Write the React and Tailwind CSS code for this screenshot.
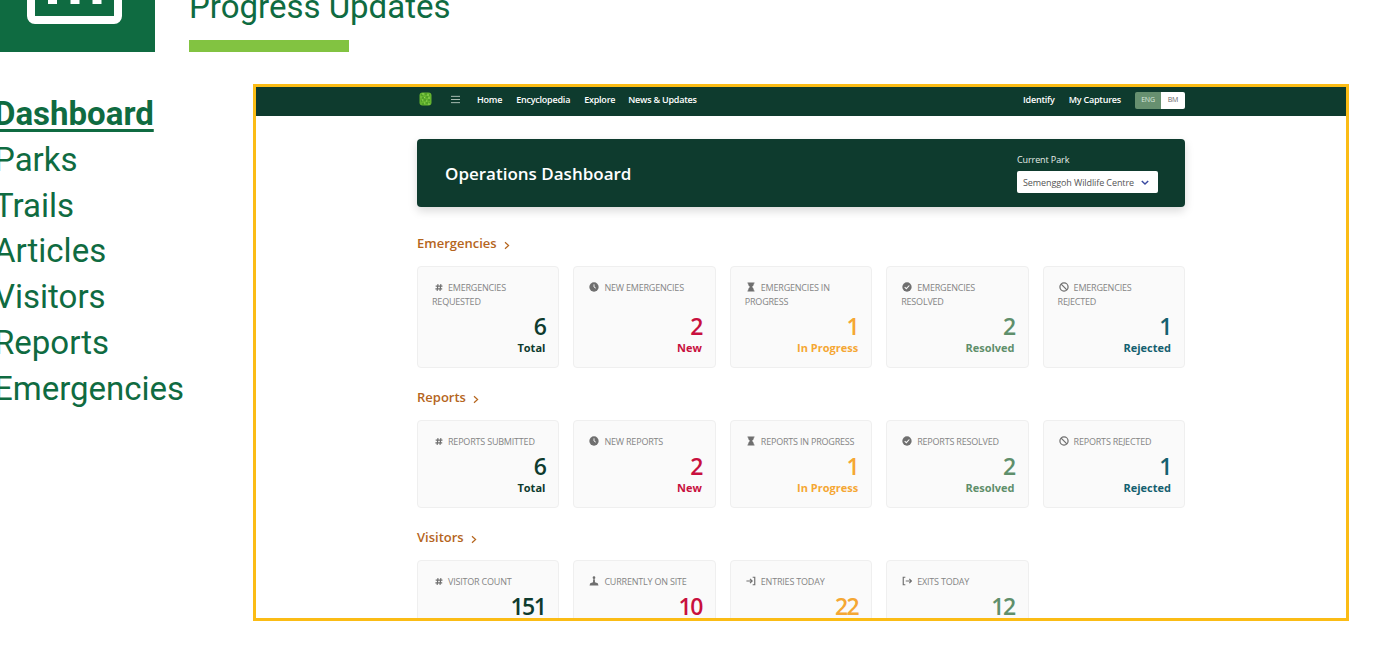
import React from "react";

const NAVY = "text-[#0e3b2e]";

const Hash = () => (
  <svg viewBox="0 0 12 12" className="w-[8px] h-[9px]" fill="none" stroke="#6f6f6f" strokeWidth="1.8">
    <path d="M4.5 1 3.2 11M8.8 1 7.5 11M1 4h10.2M.6 8h10.2" />
  </svg>
);
const Clock = () => (
  <svg viewBox="0 0 12 12" className="w-[10px] h-[10px]">
    <circle cx="6" cy="6" r="5.6" fill="#6f6f6f" />
    <path d="M6 2.8V6l2.2 1.4" fill="none" stroke="#fafafa" strokeWidth="1.1" />
  </svg>
);
const Hourglass = () => (
  <svg viewBox="0 0 12 12" className="w-[10px] h-[10px]" fill="#6f6f6f">
    <path d="M1.8.5h8.4v1.4h-.8c0 2.2-1 3.3-2.2 4.1 1.2.8 2.2 1.9 2.2 4.1h.8v1.4H1.8v-1.4h.8c0-2.2 1-3.3 2.2-4.1-1.2-.8-2.2-1.9-2.2-4.1h-.8z" />
  </svg>
);
const Check = () => (
  <svg viewBox="0 0 12 12" className="w-[10px] h-[10px]">
    <circle cx="6" cy="6" r="5.6" fill="#6f6f6f" />
    <path d="M3.2 6.2 5.2 8l3.6-3.8" fill="none" stroke="#fafafa" strokeWidth="1.3" />
  </svg>
);
const Ban = () => (
  <svg viewBox="0 0 12 12" className="w-[10px] h-[10px]" fill="none" stroke="#6f6f6f" strokeWidth="1.5">
    <circle cx="6" cy="6" r="4.9" />
    <path d="M2.6 2.6l6.8 6.8" />
  </svg>
);
const Person = () => (
  <svg viewBox="0 0 12 12" className="w-[10px] h-[10px]" fill="#6f6f6f">
    <circle cx="6" cy="2" r="1.6" />
    <path d="M5 4h2l.2 3.4 3.3 1.4.9 2.7H.6l.9-2.7 3.3-1.4z" />
  </svg>
);
const Enter = () => (
  <svg viewBox="0 0 12 12" className="w-[10px] h-[10px]" fill="none" stroke="#6f6f6f" strokeWidth="1.4">
    <path d="M.5 6h6.5M4.8 3.4 7.4 6 4.8 8.6M8 1.5h2.5v9H8" />
  </svg>
);
const Exit = () => (
  <svg viewBox="0 0 12 12" className="w-[10px] h-[10px]" fill="none" stroke="#6f6f6f" strokeWidth="1.4">
    <path d="M4 1.5H1.5v9H4M4.5 6h7M8.8 3.4 11.4 6 8.8 8.6" />
  </svg>
);
const Chevron = () => (
  <svg viewBox="0 0 10 10" className="w-[8px] h-[9px] ml-[6px] mt-[2px]" fill="none" stroke="#b5651d" strokeWidth="1.5">
    <path d="M2.5 1 7 5 2.5 9" />
  </svg>
);
const Logo = () => (
  <svg viewBox="0 0 13 14" className="w-[13px] h-[14px] -mt-[3px]">
    <rect x="0.5" y="0.5" width="12" height="13" rx="3" fill="#64b32e" />
    <path d="M2 3h2M6 2h2M10 3h1M3 6h2M7 5h2M2 9h1M5 8h2M9 8h2M3 12h2M7 11h2M10 11h1" stroke="#3f8f24" strokeWidth="1" />
    <path d="M3 2h2M8 3h2M1.500 5h1M5 5.500h1M9 6h2M3 8h1M7 9h1M5 11h1M9 12h2" stroke="#93d65a" strokeWidth="1" />
  </svg>
);

function Card({ icon, label, value, caption, color, tall }) {
  return (
    <div className={`rounded-[4px] border border-[#efefef] bg-[#fafafa] pl-[14px] pr-[13px] pt-[14px] ${tall ? "h-[102px]" : "h-[88px]"}`}>
      <div className="h-[30px] text-[9px] tracking-[-0.2px] leading-[14px] text-[#858585]">
        <span className="inline-flex w-[16px] justify-end pr-[5px] align-[-1px]">{icon}</span>
        {label}
      </div>
      <div className={`text-right text-[23px] tracking-[-1.5px] leading-[24px] font-semibold ${tall ? "mt-[3px]" : "-mt-[14px] pt-[3px]"} ${color}`}>{value}</div>
      {caption && <div className={`text-right text-[11px] leading-[18px] font-bold mt-[1px] ${color}`}>{caption}</div>}
    </div>
  );
}

function Section({ title, className, children }) {
  return (
    <section className={className}>
      <div className="flex items-center h-[18px] text-[13px] font-semibold text-[#b5651d]">
        {title}
        <Chevron />
      </div>
      <div className="grid grid-cols-5 gap-[14px] mt-[13px]">{children}</div>
    </section>
  );
}

const green = "text-[#5f8f6b]";
const orange = "text-[#f5a733]";
const red = "text-[#c8103e]";
const teal = "text-[#14606f]";

function Menu() {
  return (
    <nav className="-ml-[6px] w-[259px] shrink-0 pt-[39px] text-[33px] leading-[45.8px] text-[#0f6b41]">
      <div className="font-bold underline decoration-[3px] underline-offset-[4px]">Dashboard</div>
      <div>Parks</div>
      <div>Trails</div>
      <div>Articles</div>
      <div>Visitors</div>
      <div>Reports</div>
      <div>Emergencies</div>
    </nav>
  );
}

export default function App() {
  return (
    <div className="w-[1400px] h-[653px] overflow-hidden bg-white font-['Roboto',sans-serif]">
      <header className="flex h-[52px] items-end">
        <div className="w-[155px] h-[52px] bg-[#0f6b41] shrink-0">
          <svg viewBox="0 0 155 52" className="w-[155px] h-[52px]" fill="none" stroke="#fff">
            <rect x="31" y="-40" width="87" height="60" rx="4" strokeWidth="8" />
            <path d="M52.500 -5V4M75 -5V4M97 -5V4" strokeWidth="9" />
          </svg>
        </div>
        <div className="ml-[34px] flex flex-col h-[52px]">
          <div className="text-[33px] leading-[30px] -mt-[8px] text-[#0f6b41] whitespace-nowrap">Progress Updates</div>
          <div className="w-[160px] h-[12px] mt-auto bg-[#82c341]" />
        </div>
      </header>
      <main className="flex items-start">
        <Menu />
        <div className="mt-[32px] w-[1096px] h-[537px] overflow-hidden border-[3px] border-[#fbbc15] bg-white font-['Open_Sans',sans-serif]">
          <div className="flex items-center h-[29px] bg-[#0e3b2e] pb-[3px] pl-[163px] pr-[161px] text-[9px] tracking-[-0.22px] font-semibold text-white">
            <Logo />
            <svg viewBox="0 0 12 10" className="w-[11px] h-[9px] ml-[18px] -mt-[1px]" stroke="#b9c9c1" strokeWidth="1">
              <path d="M1 1.500h10M1 5h10M1 8.500h10" />
            </svg>
            <span className="ml-[16px]">Home</span>
            <span className="ml-[14px]">Encyclopedia</span>
            <span className="ml-[14px]">Explore</span>
            <span className="ml-[13px]">News &amp; Updates</span>
            <span className="ml-auto">Identify</span>
            <span className="ml-[14px]">My Captures</span>
            <div className="ml-[14px] flex h-[17px] w-[50px] rounded-[2px] overflow-hidden text-[7px] font-normal">
              <span className="flex-1 flex items-center justify-center bg-[#679070] text-[#dbe8df]">ENG</span>
              <span className="w-[24px] flex items-center justify-center bg-white text-[#666]">BM</span>
            </div>
          </div>
          <div className="mx-[161px] mt-[23px]">
            <div className="flex items-center justify-between h-[68px] rounded-[4px] bg-[#0e3b2e] pl-[28px] pr-[27px] shadow-[0_4px_10px_rgba(0,0,0,0.15)]">
              <span className="text-[17px] font-semibold text-white pt-[2px]">Operations Dashboard</span>
              <div>
                <div className="text-[9px] tracking-[-0.1px] leading-[13px] text-[#e5ece8]">Current Park</div>
                <div className="mt-[5px] flex items-center justify-between h-[22px] w-[141px] rounded-[2px] bg-white pt-[1px] pl-[6px] pr-[9px] text-[9px] tracking-[-0.1px] text-[#555]">
                  Semenggoh Wildlife Centre
                  <svg viewBox="0 0 10 8" className="w-[8px] h-[7px]" fill="none" stroke="#3a4aa0" strokeWidth="1.8">
                    <path d="M1 2l4 4 4-4" />
                  </svg>
                </div>
              </div>
            </div>
            <Section title="Emergencies" className="mt-[28px]">
              <Card tall icon={<Hash />} label="EMERGENCIES REQUESTED" value="6" caption="Total" color={NAVY} />
              <Card tall icon={<Clock />} label="NEW EMERGENCIES" value="2" caption="New" color={red} />
              <Card tall icon={<Hourglass />} label="EMERGENCIES IN PROGRESS" value="1" caption="In Progress" color={orange} />
              <Card tall icon={<Check />} label="EMERGENCIES RESOLVED" value="2" caption="Resolved" color={green} />
              <Card tall icon={<Ban />} label="EMERGENCIES REJECTED" value="1" caption="Rejected" color={teal} />
            </Section>
            <Section title="Reports" className="mt-[21px]">
              <Card icon={<Hash />} label="REPORTS SUBMITTED" value="6" caption="Total" color={NAVY} />
              <Card icon={<Clock />} label="NEW REPORTS" value="2" caption="New" color={red} />
              <Card icon={<Hourglass />} label="REPORTS IN PROGRESS" value="1" caption="In Progress" color={orange} />
              <Card icon={<Check />} label="REPORTS RESOLVED" value="2" caption="Resolved" color={green} />
              <Card icon={<Ban />} label="REPORTS REJECTED" value="1" caption="Rejected" color={teal} />
            </Section>
            <Section title="Visitors" className="mt-[21px]">
              <Card icon={<Hash />} label="VISITOR COUNT" value="151" color={NAVY} />
              <Card icon={<Person />} label="CURRENTLY ON SITE" value="10" color={red} />
              <Card icon={<Enter />} label="ENTRIES TODAY" value="22" color={orange} />
              <Card icon={<Exit />} label="EXITS TODAY" value="12" color={green} />
            </Section>
          </div>
        </div>
      </main>
    </div>
  );
}
